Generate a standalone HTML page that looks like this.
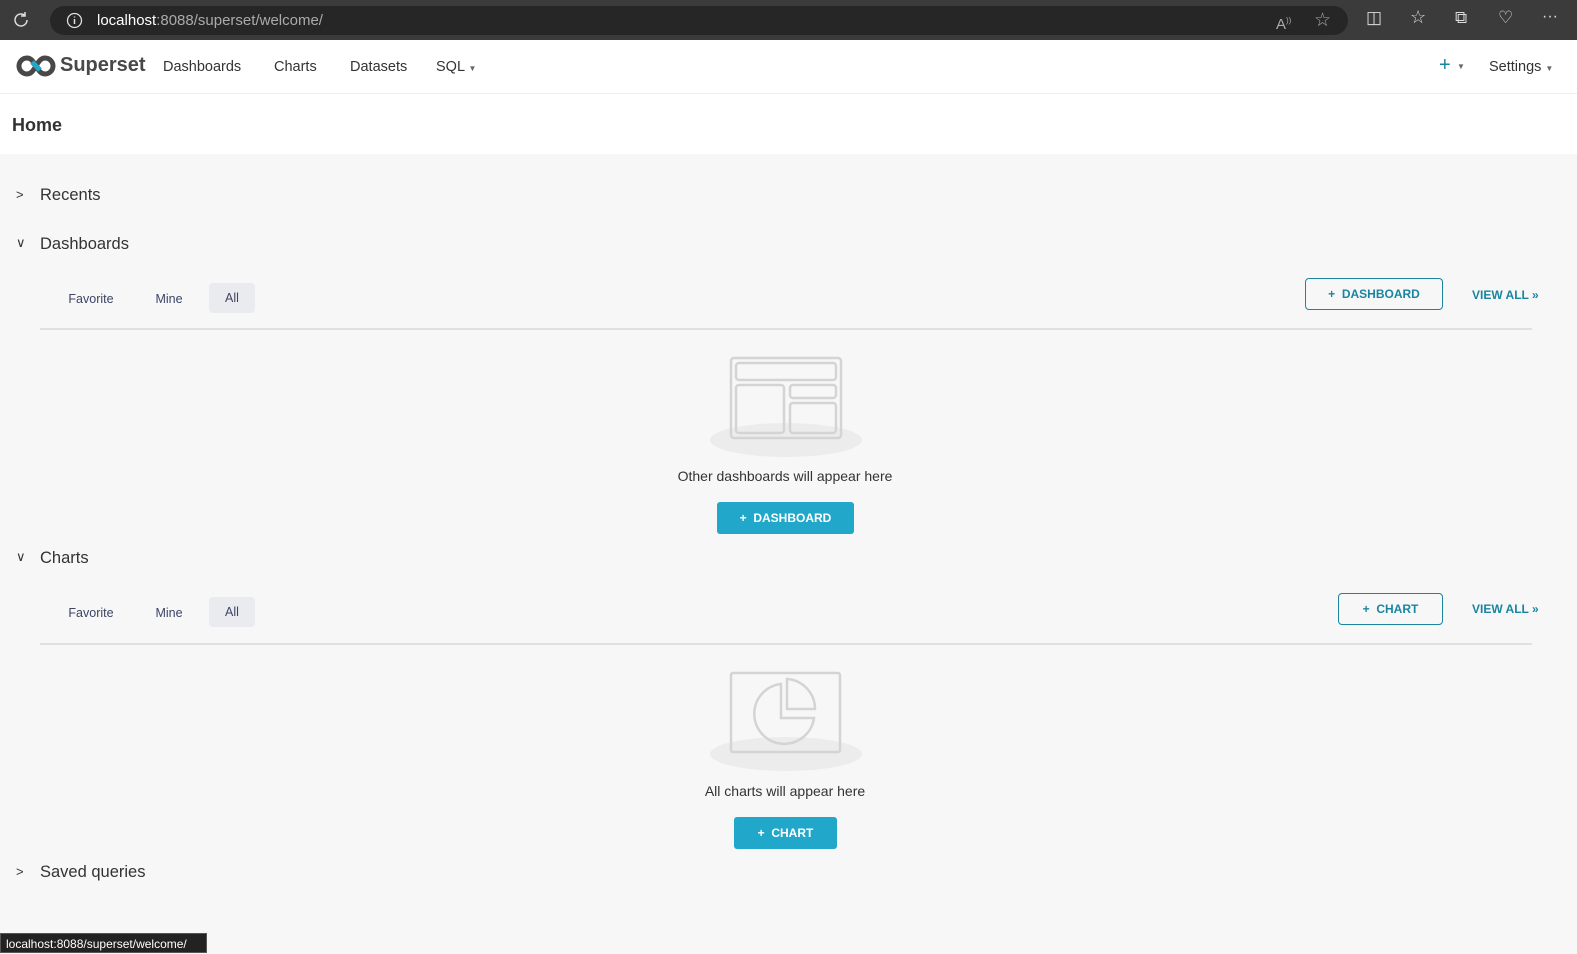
<!DOCTYPE html>
<html><head><style>
*{box-sizing:border-box;margin:0;padding:0}
body{width:1577px;height:953px;overflow:hidden;background:#f7f7f7;font-family:"Liberation Sans",sans-serif;color:#333;position:relative}
.chrome{position:absolute;left:0;top:0;width:1577px;height:40px;background:#3b3b3b}
.addr{position:absolute;left:50px;top:6px;width:1298px;height:29px;border-radius:15px;background:#262626;color:#aaa;font-size:15px;line-height:29px;padding-left:47px}
.addr b{color:#fff;font-weight:normal}
.nav{position:absolute;top:40px;left:0;width:1577px;height:54px;background:#fff;border-bottom:1px solid #eee}
.nav a{position:absolute;top:19px;font-size:14.5px;color:#333}
.hdr{position:absolute;top:94px;left:0;width:1577px;height:60px;background:#fff}
.hdr span{position:absolute;left:12px;top:21px;font-size:18px;font-weight:bold;color:#333}
.sec{position:absolute;left:40px;font-size:16.5px;color:#333}
.chev{position:absolute;left:16px;font-size:13px;color:#333}
.tab{position:absolute;font-size:12.5px;color:#3d4566;height:30px;line-height:30px;text-align:center}
.tab.on{background:#eaebef;border-radius:4px}
.line{position:absolute;left:40px;width:1492px;height:2px;background:#e0e0e0}
.obtn{position:absolute;border:1px solid #1a85a0;border-radius:4px;color:#1a85a0;font-size:12px;font-weight:bold;text-align:center;line-height:30px;height:32px}
.va{position:absolute;left:1472px;font-size:12px;font-weight:bold;color:#1a85a0}
.fbtn{position:absolute;background:#20a7c9;border-radius:3px;color:#fff;font-size:12px;font-weight:bold;text-align:center;line-height:32px;height:32px}
.msg{position:absolute;left:0;width:1570px;text-align:center;font-size:14px;color:#333}
.ell{position:absolute;background:#ececec;border-radius:50%}
</style></head><body>
<div class="chrome">
<svg style="position:absolute;left:12px;top:11px" width="18" height="18" viewBox="0 0 18 18"><path d="M15 9a6 6 0 1 1-2-4.5M13 1v4h-4" fill="none" stroke="#ddd" stroke-width="1.5"/></svg>
<div class="addr"><svg style="position:absolute;left:16px;top:6px" width="17" height="17"><circle cx="8.5" cy="8.5" r="7" fill="none" stroke="#ddd" stroke-width="1.3"/><path d="M8.5 7v5M8.5 4.5v1" stroke="#ddd" stroke-width="1.5"/></svg><b>localhost</b>:8088/superset/welcome/
<span style="position:absolute;left:1226px;top:0;color:#aaa">A<sup style="font-size:8px">))</sup></span><span style="position:absolute;left:1264px;top:0;color:#aaa;font-size:19px">☆</span></div>
<span style="position:absolute;left:1366px;top:8px;color:#ddd;font-size:17px">◫</span>
<span style="position:absolute;left:1410px;top:7px;color:#ddd;font-size:18px">☆</span>
<span style="position:absolute;left:1455px;top:8px;color:#ddd;font-size:17px">⧉</span>
<span style="position:absolute;left:1498px;top:8px;color:#ddd;font-size:17px">♡</span>
<span style="position:absolute;left:1542px;top:8px;color:#ddd;font-size:16px">···</span>
</div>
<div class="nav">
<svg style="position:absolute;left:15px;top:14px" width="42" height="24" viewBox="0 0 42 24"><path d="M12 4a8 8 0 1 0 0 16c4 0 6-3 9-8s5-8 9-8a8 8 0 1 1 0 16c-4 0-6-3-9-8S16 4 12 4z" fill="none" stroke="#484848" stroke-width="5"/><path d="M17 8l4 4M25 16l-4-4" stroke="#20a7c9" stroke-width="5"/></svg>
<span style="position:absolute;left:60px;top:14px;font-size:20px;font-weight:bold;color:#484848">Superset</span>
<a style="left:163px">Dashboards</a><a style="left:274px">Charts</a><a style="left:350px">Datasets</a><a style="left:436px">SQL <span style="font-size:8px;color:#666">▼</span></a>
<span style="position:absolute;left:1439px;top:14px;font-size:20px;color:#1a85a0">+</span><span style="position:absolute;left:1457px;top:22px;font-size:8px;color:#666">▼</span>
<a style="left:1489px">Settings <span style="font-size:8px;color:#666">▼</span></a>
</div>
<div class="hdr"><span>Home</span></div>

<span class="chev" style="top:187px">&gt;</span><span class="sec" style="top:186px">Recents</span>
<span class="chev" style="top:235px">∨</span><span class="sec" style="top:235px">Dashboards</span>
<span class="tab" style="left:58px;top:284px;width:66px">Favorite</span><span class="tab" style="left:146px;top:284px;width:46px">Mine</span><span class="tab on" style="left:209px;top:283px;width:46px">All</span>
<div class="obtn" style="left:1305px;top:278px;width:138px">+&nbsp;&nbsp;DASHBOARD</div><span class="va" style="top:288px">VIEW ALL »</span>
<div class="line" style="top:328px"></div>
<div class="ell" style="left:710px;top:423px;width:152px;height:34px"></div>
<svg style="position:absolute;left:729px;top:356px" width="114" height="84"><g fill="none" stroke="#d4d4d4" stroke-width="2.5"><rect x="2" y="2" width="110" height="80" rx="3"/><rect x="7" y="7" width="100" height="17" rx="3"/><rect x="7" y="29" width="48" height="48" rx="3"/><rect x="61" y="29" width="46" height="13" rx="3"/><rect x="61" y="47" width="46" height="30" rx="3"/></g></svg>
<div class="msg" style="top:468px">Other dashboards will appear here</div>
<div class="fbtn" style="left:717px;top:502px;width:137px">+&nbsp;&nbsp;DASHBOARD</div>

<span class="chev" style="top:549px">∨</span><span class="sec" style="top:549px">Charts</span>
<span class="tab" style="left:58px;top:598px;width:66px">Favorite</span><span class="tab" style="left:146px;top:598px;width:46px">Mine</span><span class="tab on" style="left:209px;top:597px;width:46px">All</span>
<div class="obtn" style="left:1338px;top:593px;width:105px">+&nbsp;&nbsp;CHART</div><span class="va" style="top:602px">VIEW ALL »</span>
<div class="line" style="top:643px"></div>
<div class="ell" style="left:710px;top:737px;width:152px;height:34px"></div>
<svg style="position:absolute;left:729px;top:671px" width="114" height="84"><g fill="none" stroke="#d4d4d4" stroke-width="2.5"><rect x="2" y="2" width="109" height="79" rx="2"/><path d="M52 13A30 30 0 1 0 85 47H52Z"/><path d="M58 8A30 30 0 0 1 86 38H58Z"/></g></svg>
<div class="msg" style="top:783px">All charts will appear here</div>
<div class="fbtn" style="left:734px;top:817px;width:103px">+&nbsp;&nbsp;CHART</div>

<span class="chev" style="top:864px">&gt;</span><span class="sec" style="top:863px">Saved queries</span>
<div style="position:absolute;left:0;top:933px;width:207px;height:20px;background:#222;color:#fff;font-size:12px;line-height:20px;padding-left:5px;border:1px solid #555">localhost:8088/superset/welcome/</div>
</body></html>
